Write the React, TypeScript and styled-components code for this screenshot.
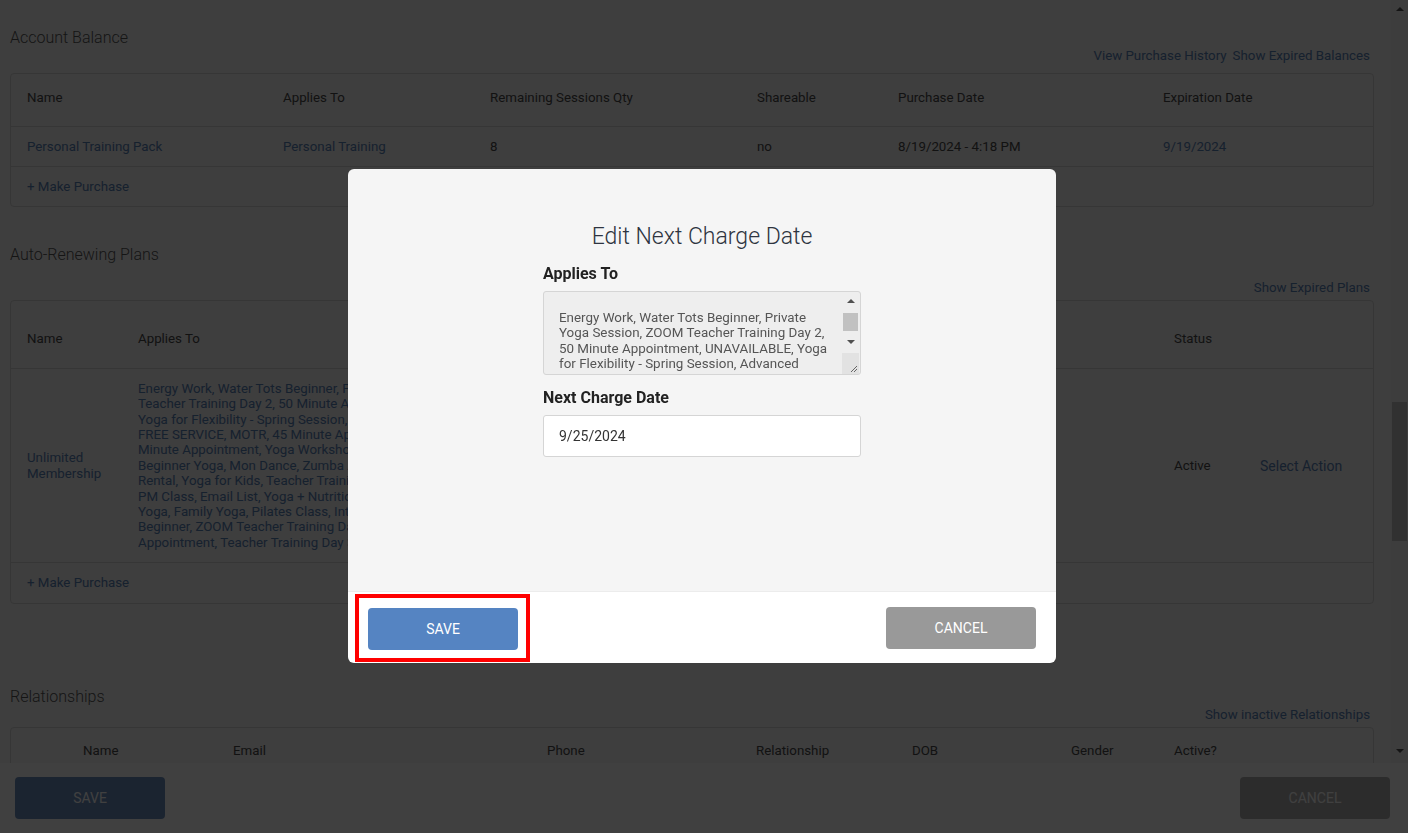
import styled, { createGlobalStyle } from "styled-components";

const GlobalStyle = createGlobalStyle`
  html, body {
    margin: 0;
    padding: 0;
    height: 100%;
    overflow: hidden;
  }
  body {
    font-family: Roboto, "Liberation Sans", Arial, sans-serif;
    color: #333;
    background: #f5f5f5;
  }
  * { box-sizing: border-box; }
`;

const LINK = "#5a82b8";
const TEXT = "#4a4a4a";

const Screen = styled.div`
  height: 100vh;
  display: flex;
  flex-direction: column;
  background: #f5f5f5;
`;

const ScrollArea = styled.div`
  flex: 1;
  min-height: 0;
  display: flex;
  overflow: hidden;
`;

const Content = styled.main`
  flex: 1;
  min-width: 0;
  padding: 28px 17px 0 10px;
`;

const SectionTitle = styled.h2<{ $mt?: number }>`
  margin: ${(p) => p.$mt ?? 0}px 0 0;
  font-size: 16px;
  font-weight: 300;
  line-height: 20px;
  color: #555;
`;

const LinkBar = styled.div<{ $mt?: number }>`
  margin-top: ${(p) => p.$mt ?? 0}px;
  margin-right: 4px;
  display: flex;
  justify-content: flex-end;
  gap: 6px;
  font-size: 13.3px;
  line-height: 16px;
`;

const Link = styled.a`
  color: ${LINK};
  text-decoration: none;
`;

const Table = styled.div<{ $mt: number }>`
  margin-top: ${(p) => p.$mt}px;
  border: 1px solid #d6d6d6;
  border-radius: 4px;
  background: #f5f5f5;
  overflow: hidden;
`;

const Row = styled.div<{ $cols: string; $h: number; $pt?: number; $pb?: number }>`
  display: grid;
  grid-template-columns: ${(p) => p.$cols};
  align-items: center;
  height: ${(p) => p.$h}px;
  padding: ${(p) => p.$pt ?? 0}px 16px ${(p) => p.$pb ?? 0}px;
  border-top: 1px solid #d6d6d6;
  font-size: 13.3px;
  line-height: 16px;
  color: ${TEXT};
  &:first-child { border-top: 0; }
`;

const Cell = styled.div<{ $link?: boolean }>`
  color: ${(p) => (p.$link ? LINK : TEXT)};
  white-space: nowrap;
`;

const WrapCell = styled.div`
  color: ${LINK};
  line-height: 15.4px;
  overflow: hidden;
  white-space: nowrap;
`;

const LinkCell = styled.div`
  color: ${LINK};
  line-height: 16px;
`;

const ActionCell = styled.div`
  color: ${LINK};
  font-size: 14px;
`;

const PageScrollbar = styled.div`
  width: 17px;
  flex-shrink: 0;
  background: #f1f1f1;
  display: flex;
  flex-direction: column;
`;

const ScrollArrow = styled.div<{ $dir: "up" | "down"; $h: number; $mb?: number }>`
  height: ${(p) => p.$h}px;
  margin-bottom: ${(p) => p.$mb ?? 0}px;
  flex-shrink: 0;
  display: flex;
  align-items: center;
  justify-content: center;
  &::before {
    content: "";
    border-left: 4px solid transparent;
    border-right: 4px solid transparent;
    ${(p) =>
      p.$dir === "up"
        ? "border-bottom: 4px solid #505050;"
        : "border-top: 4px solid #505050;"}
  }
`;

const ScrollTrack = styled.div<{ $offset: number }>`
  flex: 1;
  padding: ${(p) => p.$offset}px 1px 0;
`;

const ScrollThumb = styled.div<{ $size: number }>`
  height: ${(p) => p.$size}px;
  background: #c1c1c1;
`;

const BottomBar = styled.footer`
  height: 70px;
  flex-shrink: 0;
  background: #fff;
  display: flex;
  align-items: center;
  justify-content: space-between;
  padding: 0 18px 0 15px;
`;

const Button = styled.button<{ $bg: string }>`
  width: 150px;
  height: 42px;
  border: 0;
  border-radius: 4px;
  background: ${(p) => p.$bg};
  color: #fff;
  font-family: Roboto, "Liberation Sans", Arial, sans-serif;
  font-size: 14px;
  text-transform: uppercase;
  cursor: pointer;
`;

/* modal */

const Overlay = styled.div`
  position: fixed;
  inset: 0;
  background: rgba(0, 0, 0, 0.75);
  display: flex;
  align-items: center;
  justify-content: center;
  padding: 0 4px 1px 0;
`;

const Modal = styled.div`
  width: 708px;
  height: 494px;
  border-radius: 6px;
  overflow: hidden;
  display: flex;
  flex-direction: column;
`;

const ModalBody = styled.div`
  flex: 1;
  background: #f5f5f5;
  padding-top: 53px;
  display: flex;
  flex-direction: column;
  align-items: center;
`;

const ModalTitle = styled.h3`
  margin: 0;
  font-size: 23px;
  font-weight: 300;
  line-height: 30px;
  color: #2e3440;
`;

const Form = styled.div`
  width: 318px;
  margin-top: 12px;
`;

const FieldLabel = styled.label<{ $mt?: number }>`
  display: block;
  margin-top: ${(p) => p.$mt ?? 0}px;
  font-size: 16px;
  font-weight: 700;
  line-height: 20px;
  color: #222;
`;

const ReadOnlyBox = styled.div`
  margin-top: 7px;
  height: 84px;
  border: 1px solid #d5d5d5;
  border-radius: 3px;
  background: #eeeeee;
  display: flex;
`;

const BoxText = styled.div`
  flex: 1;
  min-width: 0;
  padding: 18px 0 0 15px;
  font-size: 13.4px;
  line-height: 15.4px;
  color: #555;
  white-space: nowrap;
  overflow: hidden;
`;

const BoxScrollbar = styled.div`
  width: 17px;
  margin-right: 1px;
  display: flex;
  flex-direction: column;
`;

const ResizeCorner = styled.div`
  margin-top: 2px;
  flex: 1;
  background: #e2e2e2;
  display: flex;
  align-items: flex-end;
  justify-content: flex-end;
  padding: 0 1px 1px 0;
`;

const DateInput = styled.input`
  display: block;
  width: 100%;
  margin-top: 7px;
  height: 42px;
  border: 1px solid #d5d5d5;
  border-radius: 3px;
  background: #fff;
  padding: 0 15px;
  font-family: Roboto, "Liberation Sans", Arial, sans-serif;
  font-size: 14px;
  color: #333;
  outline: none;
`;

const ModalFooter = styled.div`
  height: 72px;
  background: #fff;
  border-top: 1px solid #ececec;
  display: flex;
  align-items: center;
  justify-content: space-between;
  padding: 0 20px 0 7px;
`;

const HighlightFrame = styled.div`
  border: 4px solid #ff0000;
  padding: 10px 8px 8px 9px;
`;

const T1 = "256px 207px 267px 141px 265px 1fr";
const T2 = "111px 423px 613px 86px 1fr";
const T3 = "56px 150px 314px 209px 156px 159px 103px 1fr";

const plans = [
  "Energy Work, Water Tots Beginner, Private Yoga Session, ZOOM",
  "Teacher Training Day 2, 50 Minute Appointment, UNAVAILABLE,",
  "Yoga for Flexibility - Spring Session, Advanced Pilates Class,",
  "FREE SERVICE, MOTR, 45 Minute Appointment, Intro Yoga, 30",
  "Minute Appointment, Yoga Workshop, Reformer Class, Intermediate",
  "Beginner Yoga, Mon Dance, Zumba Aerobics, Studio Space",
  "Rental, Yoga for Kids, Teacher Training Day 1, Monday 6:00",
  "PM Class, Email List, Yoga + Nutrition, Restorative Hot",
  "Yoga, Family Yoga, Pilates Class, Intermediate Swim, Water Tots",
  "Beginner, ZOOM Teacher Training Day 1, 90 Minute",
  "Appointment, Teacher Training Day 3",
];

const appliesTo = [
  "Energy Work, Water Tots Beginner, Private",
  "Yoga Session, ZOOM Teacher Training Day 2,",
  "50 Minute Appointment, UNAVAILABLE, Yoga",
  "for Flexibility - Spring Session, Advanced",
];

export default function App() {
  return (
    <>
      <GlobalStyle />
      <Screen>
        <ScrollArea>
          <Content>
            <SectionTitle>Account Balance</SectionTitle>
            <LinkBar>
              <Link>View Purchase History</Link>
              <Link>Show Expired Balances</Link>
            </LinkBar>
            <Table $mt={9}>
              <Row $cols={T1} $h={52} $pb={5}>
                <Cell>Name</Cell>
                <Cell>Applies To</Cell>
                <Cell>Remaining Sessions Qty</Cell>
                <Cell>Shareable</Cell>
                <Cell>Purchase Date</Cell>
                <Cell>Expiration Date</Cell>
              </Row>
              <Row $cols={T1} $h={40}>
                <Cell $link>Personal Training Pack</Cell>
                <Cell $link>Personal Training</Cell>
                <Cell>8</Cell>
                <Cell>no</Cell>
                <Cell>8/19/2024 - 4:18 PM</Cell>
                <Cell $link>9/19/2024</Cell>
              </Row>
              <Row $cols="1fr" $h={40}>
                <Cell $link>+ Make Purchase</Cell>
              </Row>
            </Table>

            <SectionTitle $mt={38}>Auto-Renewing Plans</SectionTitle>
            <LinkBar $mt={15}>
              <Link>Show Expired Plans</Link>
            </LinkBar>
            <Table $mt={4}>
              <Row $cols={T2} $h={67} $pt={9}>
                <Cell>Name</Cell>
                <Cell>Applies To</Cell>
                <Cell />
                <Cell>Status</Cell>
                <Cell />
              </Row>
              <Row $cols={T2} $h={194}>
                <LinkCell>
                  Unlimited
                  <br />
                  Membership
                </LinkCell>
                <WrapCell>
                  {plans.map((l) => (
                    <div key={l}>{l}</div>
                  ))}
                </WrapCell>
                <Cell />
                <Cell>Active</Cell>
                <ActionCell>Select Action</ActionCell>
              </Row>
              <Row $cols="1fr" $h={41}>
                <Cell $link>+ Make Purchase</Cell>
              </Row>
            </Table>

            <SectionTitle $mt={83}>Relationships</SectionTitle>
            <LinkBar>
              <Link>Show inactive Relationships</Link>
            </LinkBar>
            <Table $mt={4}>
              <Row $cols={T3} $h={50} $pb={4}>
                <Cell />
                <Cell>Name</Cell>
                <Cell>Email</Cell>
                <Cell>Phone</Cell>
                <Cell>Relationship</Cell>
                <Cell>DOB</Cell>
                <Cell>Gender</Cell>
                <Cell>Active?</Cell>
              </Row>
            </Table>
          </Content>
          <PageScrollbar>
            <ScrollArrow $dir="up" $h={17} />
            <ScrollTrack $offset={385}>
              <ScrollThumb $size={139} />
            </ScrollTrack>
            <ScrollArrow $dir="down" $h={17} $mb={4} />
          </PageScrollbar>
        </ScrollArea>
        <BottomBar>
          <Button $bg="#6c90c0">Save</Button>
          <Button $bg="#b0b0b0">Cancel</Button>
        </BottomBar>
      </Screen>

      <Overlay>
        <Modal>
          <ModalBody>
            <ModalTitle>Edit Next Charge Date</ModalTitle>
            <Form>
              <FieldLabel>Applies To</FieldLabel>
              <ReadOnlyBox>
                <BoxText>
                  {appliesTo.map((l) => (
                    <div key={l}>{l}</div>
                  ))}
                </BoxText>
                <BoxScrollbar>
                  <ScrollArrow $dir="up" $h={18} />
                  <ScrollTrack $offset={3}>
                    <ScrollThumb $size={18} />
                  </ScrollTrack>
                  <ScrollArrow $dir="down" $h={18} />
                  <ResizeCorner>
                    <svg width="9" height="9" viewBox="0 0 9 9">
                      <path d="M8 2 L2 8 M8 5 L5 8" stroke="#666" strokeWidth="1" fill="none" />
                    </svg>
                  </ResizeCorner>
                </BoxScrollbar>
              </ReadOnlyBox>
              <FieldLabel $mt={13}>Next Charge Date</FieldLabel>
              <DateInput readOnly defaultValue="9/25/2024" />
            </Form>
          </ModalBody>
          <ModalFooter>
            <HighlightFrame>
              <Button $bg="#5584c2">Save</Button>
            </HighlightFrame>
            <Button $bg="#999999">Cancel</Button>
          </ModalFooter>
        </Modal>
      </Overlay>
    </>
  );
}
